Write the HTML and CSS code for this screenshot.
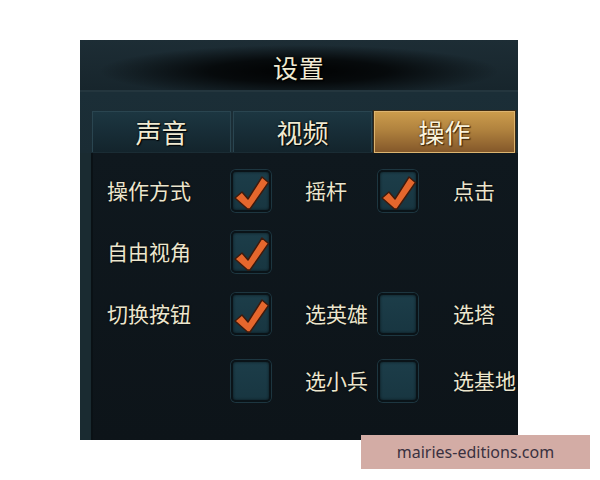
FILE: index.html
```html
<!DOCTYPE html>
<html lang="zh-CN">
<head>
<meta charset="utf-8">
<title>设置</title>
<link rel="stylesheet" href="styles.css">
</head>
<body>
<div class="page">
  <div class="panel">
    <div class="titlebar"><span class="title">设置</span></div>
    <div class="tabbar">
      <div class="tab">声音</div>
      <div class="tab">视频</div>
      <div class="tab active">操作</div>
    </div>
    <div class="content">
      <div class="grid">
        <div class="label">操作方式</div>
        <div class="cell"><div class="box checked"><svg viewBox="0 0 40 42"><path d="M4 28 L11 22 L17 29 L31 7 L37.5 12.5 L19 39 L16.5 39 Z"/></svg></div></div>
        <div class="label">摇杆</div>
        <div class="cell"><div class="box checked"><svg viewBox="0 0 40 42"><path d="M4 28 L11 22 L17 29 L31 7 L37.5 12.5 L19 39 L16.5 39 Z"/></svg></div></div>
        <div class="label">点击</div>

        <div class="label">自由视角</div>
        <div class="cell"><div class="box checked"><svg viewBox="0 0 40 42"><path d="M4 28 L11 22 L17 29 L31 7 L37.5 12.5 L19 39 L16.5 39 Z"/></svg></div></div>
        <div class="label"></div>
        <div class="cell"></div>
        <div class="label"></div>

        <div class="label">切换按钮</div>
        <div class="cell"><div class="box checked"><svg viewBox="0 0 40 42"><path d="M4 28 L11 22 L17 29 L31 7 L37.5 12.5 L19 39 L16.5 39 Z"/></svg></div></div>
        <div class="label">选英雄</div>
        <div class="cell"><div class="box"></div></div>
        <div class="label">选塔</div>

        <div class="label"></div>
        <div class="cell"><div class="box"></div></div>
        <div class="label">选小兵</div>
        <div class="cell"><div class="box"></div></div>
        <div class="label">选基地</div>
      </div>
    </div>
  </div>
  <div class="watermark">mairies-editions.com</div>
</div>
</body>
</html>
```

FILE: styles.css
```css
html, body {
  margin: 0;
  padding: 0;
  background: #ffffff;
}

.page {
  position: relative;
  width: 600px;
  height: 480px;
  padding: 40px 0 0 80px;
  box-sizing: border-box;
  font-family: "Noto Sans CJK SC", "Noto Sans", sans-serif;
}

.panel {
  width: 438px;
  height: 400px;
  background: #1b2b33;
  display: flex;
  flex-direction: column;
  overflow: hidden;
}

.titlebar {
  height: 50px;
  display: flex;
  align-items: center;
  justify-content: center;
  background:
    radial-gradient(ellipse 200px 26px at 50% 62%, rgba(0,0,0,0.95) 0%, rgba(0,0,0,0.75) 45%, rgba(0,0,0,0) 100%),
    linear-gradient(#1d2d35, #17252c);
  border-bottom: 2px solid #24363e;
}

.title {
  color: #f1ebd3;
  font-size: 25px;
  line-height: 1;
  letter-spacing: 1px;
  text-shadow: 0 0 2px #000, 1px 1px 1px #000;
  margin-top: 4px;
}

.tabbar {
  display: flex;
  gap: 2px;
  padding: 19px 0 0 12px;
  height: 42px;
  background: linear-gradient(#1b2e37, #1a2c34);
}

.tab {
  width: 137px;
  height: 40px;
  border: 1px solid #2a4550;
  border-bottom: none;
  background: linear-gradient(#1c3641, #13242c);
  color: #f0ead2;
  font-size: 26px;
  line-height: 40px;
  text-align: center;
  text-shadow: 0 0 2px #000, 1px 1px 1px #000;
}

.tab.active {
  width: 139px;
  border: 1px solid #dcb470;
  background: linear-gradient(#cc9c4c 0%, #b0823e 45%, #84582a 100%);
  color: #fbf3dc;
  text-shadow: 0 0 2px #3a2208, 1px 1px 1px #3a2208;
  box-shadow: 0 0 0 1px #3b2a14;
}

.content {
  flex: 1;
  background: linear-gradient(#0f181e, #0d1419);
  border-left: 11px solid #1a2b31;
  box-shadow: inset 2px 0 0 #0a1115;
  padding: 17px 0 0 16px;
}

.grid {
  display: grid;
  grid-template-columns: 124px 74px 73px 75px 64px;
  grid-template-rows: 61px 62px 67px 42px;
  align-items: start;
}

.label {
  height: 40px;
  display: flex;
  align-items: center;
  color: #ece6ce;
  font-size: 21px;
  white-space: nowrap;
  text-shadow: 0 0 2px #000;
}

.cell {
  height: 42px;
}

.box {
  width: 40px;
  height: 42px;
  box-sizing: border-box;
  border: 2px solid #0a1318;
  border-radius: 5px;
  background: linear-gradient(#1c3d49, #183641);
  box-shadow: 0 0 0 1px #1d3640, inset 0 0 3px rgba(0,0,0,0.6);
  position: relative;
}

.box svg {
  position: absolute;
  left: -2px;
  top: -2px;
  width: 40px;
  height: 42px;
}

.box svg path {
  fill: #e5672d;
  stroke: #3e1a0c;
  stroke-width: 1.4;
  stroke-linejoin: round;
}

.watermark {
  position: absolute;
  left: 361px;
  top: 435px;
  width: 229px;
  height: 34px;
  background: #d3aca5;
  color: #3a3140;
  font-family: "Noto Sans", "DejaVu Sans", sans-serif;
  font-size: 16px;
  line-height: 34px;
  text-align: center;
}
```
